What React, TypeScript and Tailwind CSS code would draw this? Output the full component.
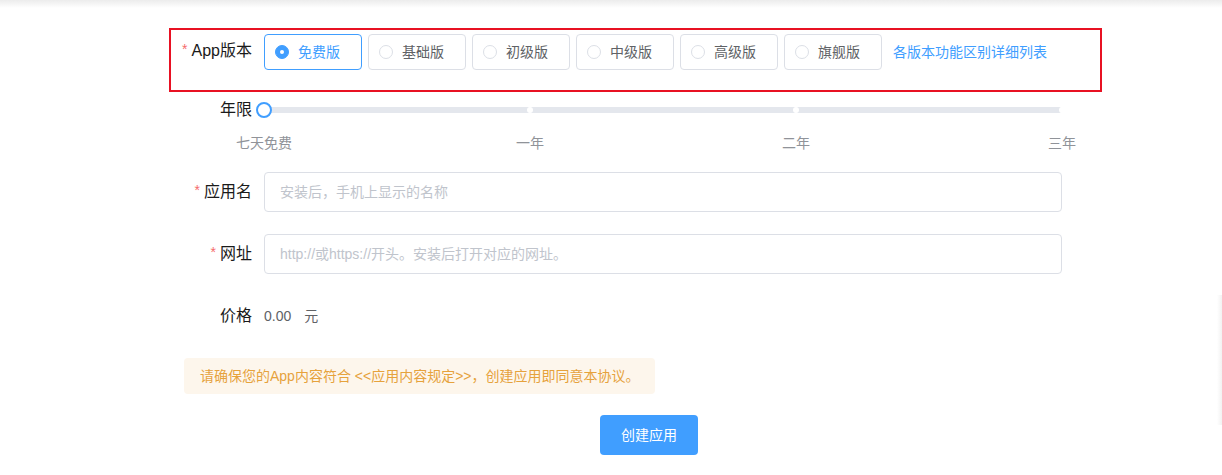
import React, { useState } from "react";

const versions = ["免费版", "基础版", "初级版", "中级版", "高级版", "旗舰版"];
const marks = ["七天免费", "一年", "二年", "三年"];

const Label = ({ text, required }: { text: string; required?: boolean }) => (
  <div className="flex items-center justify-end text-[16px] text-[#1a1a1a] whitespace-nowrap">
    {required && <span className="text-[#f56c6c] text-[14px] mr-[4px] -mt-[4px]">*</span>}
    {text}
  </div>
);

const App = () => {
  const [version, setVersion] = useState("免费版");

  return (
    <div
      className="relative w-[1222px] h-[475px] bg-white overflow-hidden"
      style={{ fontFamily: '"Liberation Sans", "Noto Sans CJK SC", sans-serif' }}
    >
      <div className="h-[8px] bg-gradient-to-b from-[#ececec] to-white" />

      <div className="ml-[169px] mt-[20px] w-[933px]">
        {/* version picker */}
        <div className="h-[64px] border-2 border-[#e81123] flex pt-[4px]">
          <div className="w-[81px] h-[36px] flex items-center justify-end -mt-[1px]">
            <Label text="App版本" required />
          </div>
          <div className="flex items-center gap-[6px] ml-[12px] h-[36px]">
            {versions.map((v) => {
              const active = v === version;
              return (
                <button
                  key={v}
                  type="button"
                  onClick={() => setVersion(v)}
                  className={`w-[98px] h-[36px] flex items-center pl-[10px] rounded-[4px] border text-[14px] ${
                    active
                      ? "border-[#409eff] text-[#409eff]"
                      : "border-[#dcdfe6] text-[#606266]"
                  }`}
                >
                  <span
                    className={`w-[14px] h-[14px] rounded-full flex items-center justify-center border ${
                      active ? "bg-[#409eff] border-[#409eff]" : "border-[#dcdfe6] bg-white"
                    }`}
                  >
                    {active && <span className="w-[4px] h-[4px] rounded-full bg-white" />}
                  </span>
                  <span className="ml-[9px]">{v}</span>
                </button>
              );
            })}
            <span className="ml-[5px] text-[14px] text-[#409eff] cursor-pointer">
              各版本功能区别详细列表
            </span>
          </div>
        </div>

        {/* slider */}
        <div className="flex h-[36px] items-center">
          <div className="w-[83px]">
            <Label text="年限" />
          </div>
          <div className="relative ml-[12px] w-[798px] h-[6px] rounded-[3px] bg-[#e4e7ed]">
            <span className="absolute top-0 left-[266px] w-[6px] h-[6px] -ml-[3px] rounded-full bg-white" />
            <span className="absolute top-0 left-[532px] w-[6px] h-[6px] -ml-[3px] rounded-full bg-white" />
            <span className="absolute top-0 left-[798px] w-[6px] h-[6px] -ml-[3px] rounded-full bg-white" />
            <span className="absolute -top-[5px] -left-[8px] w-[16px] h-[16px] rounded-full border-2 border-[#409eff] bg-white" />
          </div>
        </div>
        <div className="flex mt-[5px] h-[20px]">
          <div className="ml-[95px] w-[798px] relative text-[14px] text-[#909399]">
            {marks.map((m, i) => (
              <span
                key={m}
                className="absolute top-0 -translate-x-1/2 whitespace-nowrap"
                style={{ left: `${(i * 798) / 3}px` }}
              >
                {m}
              </span>
            ))}
          </div>
        </div>

        {/* inputs */}
        <div className="flex items-center mt-[19px]">
          <div className="w-[83px]">
            <Label text="应用名" required />
          </div>
          <input
            className="ml-[12px] w-[798px] h-[40px] rounded-[4px] border border-[#dcdfe6] px-[15px] text-[14px] placeholder:text-[#c0c4cc] outline-none"
            placeholder="安装后，手机上显示的名称"
          />
        </div>
        <div className="flex items-center mt-[22px]">
          <div className="w-[83px]">
            <Label text="网址" required />
          </div>
          <input
            className="ml-[12px] w-[798px] h-[40px] rounded-[4px] border border-[#dcdfe6] px-[15px] text-[14px] placeholder:text-[#c0c4cc] outline-none"
            placeholder="http://或https://开头。安装后打开对应的网址。"
          />
        </div>

        {/* price */}
        <div className="flex items-center mt-[22px] h-[40px]">
          <div className="w-[83px]">
            <Label text="价格" />
          </div>
          <span className="ml-[12px] text-[14px] text-[#606266]">0.00</span>
          <span className="ml-[13px] text-[14px] text-[#606266]">元</span>
        </div>

        {/* notice */}
        <div className="ml-[15px] mt-[22px] w-[471px] h-[36px] rounded-[4px] bg-[#fdf6ec] flex items-center pl-[16px] text-[14px] text-[#e6a23c]">
          请确保您的App内容符合 &lt;&lt;应用内容规定&gt;&gt;，创建应用即同意本协议。
        </div>

        <button
          type="button"
          className="ml-[431px] mt-[21px] w-[98px] h-[40px] rounded-[4px] bg-[#409eff] text-white text-[14px]"
        >
          创建应用
        </button>
      </div>

      <div className="absolute right-0 top-[295px] w-[5px] h-[130px] bg-gradient-to-l from-[#f2f2f2] to-white" />
    </div>
  );
};

export default App;
